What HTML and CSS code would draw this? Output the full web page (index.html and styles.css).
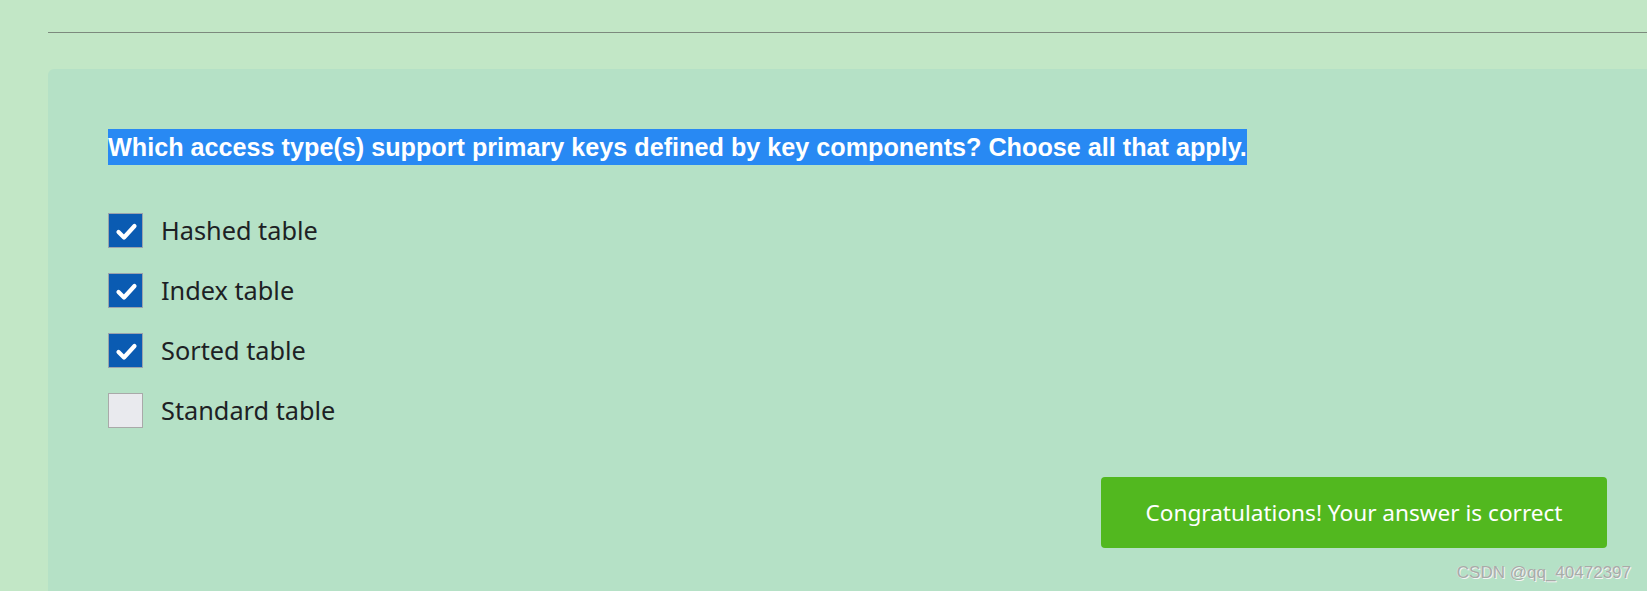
FILE: index.html
```html
<!DOCTYPE html>
<html lang="en">
<head>
<meta charset="utf-8">
<title>Quiz</title>
<link rel="stylesheet" href="styles.css">
</head>
<body>
<div class="page">
  <div class="rule"></div>
  <section class="card">
    <p class="question"><span class="selected">Which access type(s) support primary keys defined by key components? Choose all that apply.</span></p>
    <ul class="options">
      <li class="option">
        <span class="box checked"><svg viewBox="0 0 35 35" width="35" height="35"><path d="M10.5 19 L16 24.5 L26.5 13" fill="none" stroke="#fff" stroke-width="4.2" stroke-linecap="round" stroke-linejoin="round"/></svg></span>
        <span class="label">Hashed table</span>
      </li>
      <li class="option">
        <span class="box checked"><svg viewBox="0 0 35 35" width="35" height="35"><path d="M10.5 19 L16 24.5 L26.5 13" fill="none" stroke="#fff" stroke-width="4.2" stroke-linecap="round" stroke-linejoin="round"/></svg></span>
        <span class="label">Index table</span>
      </li>
      <li class="option">
        <span class="box checked"><svg viewBox="0 0 35 35" width="35" height="35"><path d="M10.5 19 L16 24.5 L26.5 13" fill="none" stroke="#fff" stroke-width="4.2" stroke-linecap="round" stroke-linejoin="round"/></svg></span>
        <span class="label">Sorted table</span>
      </li>
      <li class="option">
        <span class="box"></span>
        <span class="label">Standard table</span>
      </li>
    </ul>
    <div class="actions">
      <div class="result">Congratulations! Your answer is correct</div>
    </div>
  </section>
  <div class="watermark">CSDN @qq_40472397</div>
</div>
</body>
</html>
```

FILE: styles.css
```css
html, body {
  margin: 0;
  padding: 0;
}
body {
  background: #c2e7c6;
  font-family: "Noto Sans", "Liberation Sans", Arial, sans-serif;
  color: #1d2124;
  overflow: hidden;
}
.page {
  position: relative;
  height: 591px;
  padding-left: 48px;
  box-sizing: border-box;
  display: flex;
  flex-direction: column;
}
.rule {
  height: 1px;
  background: #7c8a7d;
  margin-top: 32px;
  flex: none;
}
.card {
  flex: 1;
  margin-top: 36px;
  background: #b5e1c6;
  border-top-left-radius: 6px;
  padding: 60px 40px 0 60px;
}
.question {
  margin: 0;
  font-family: "Liberation Sans", Arial, sans-serif;
  font-weight: bold;
  font-size: 25.2px;
  line-height: 36px;
  height: 36px;
}
.selected {
  background: #2889f3;
  color: #ffffff;
  display: inline-block;
  height: 36px;
}
.options {
  list-style: none;
  margin: 48px 0 0 0;
  padding: 0;
  display: flex;
  flex-direction: column;
  gap: 25px;
}
.option {
  display: flex;
  align-items: center;
  gap: 18px;
  height: 35px;
}
.box {
  width: 35px;
  height: 35px;
  box-sizing: border-box;
  border: 1px solid #a9a9a9;
  background: #e9eaee;
  display: flex;
  align-items: center;
  justify-content: center;
  flex: none;
}
.box svg {
  display: block;
  margin: -1px;
}
.box.checked {
  background: #0a5bb2;
  border-color: #9aa3ad;
}
.label {
  font-size: 25.3px;
  line-height: 35px;
  color: #1d2124;
}
.actions {
  display: flex;
  justify-content: flex-end;
  margin-top: 49px;
}
.result {
  width: 506px;
  height: 71px;
  box-sizing: border-box;
  background: #52b81f;
  border-radius: 4px;
  color: #ffffff;
  font-size: 22.6px;
  display: flex;
  align-items: center;
  justify-content: center;
}
.watermark {
  position: absolute;
  right: 16px;
  bottom: 8px;
  font-family: "Liberation Sans", Arial, sans-serif;
  font-size: 17px;
  color: #a7aca8;
  text-shadow: 1px 1px 0 #f4f4f4, -1px 0 0 #d8dcd8;
}
```
